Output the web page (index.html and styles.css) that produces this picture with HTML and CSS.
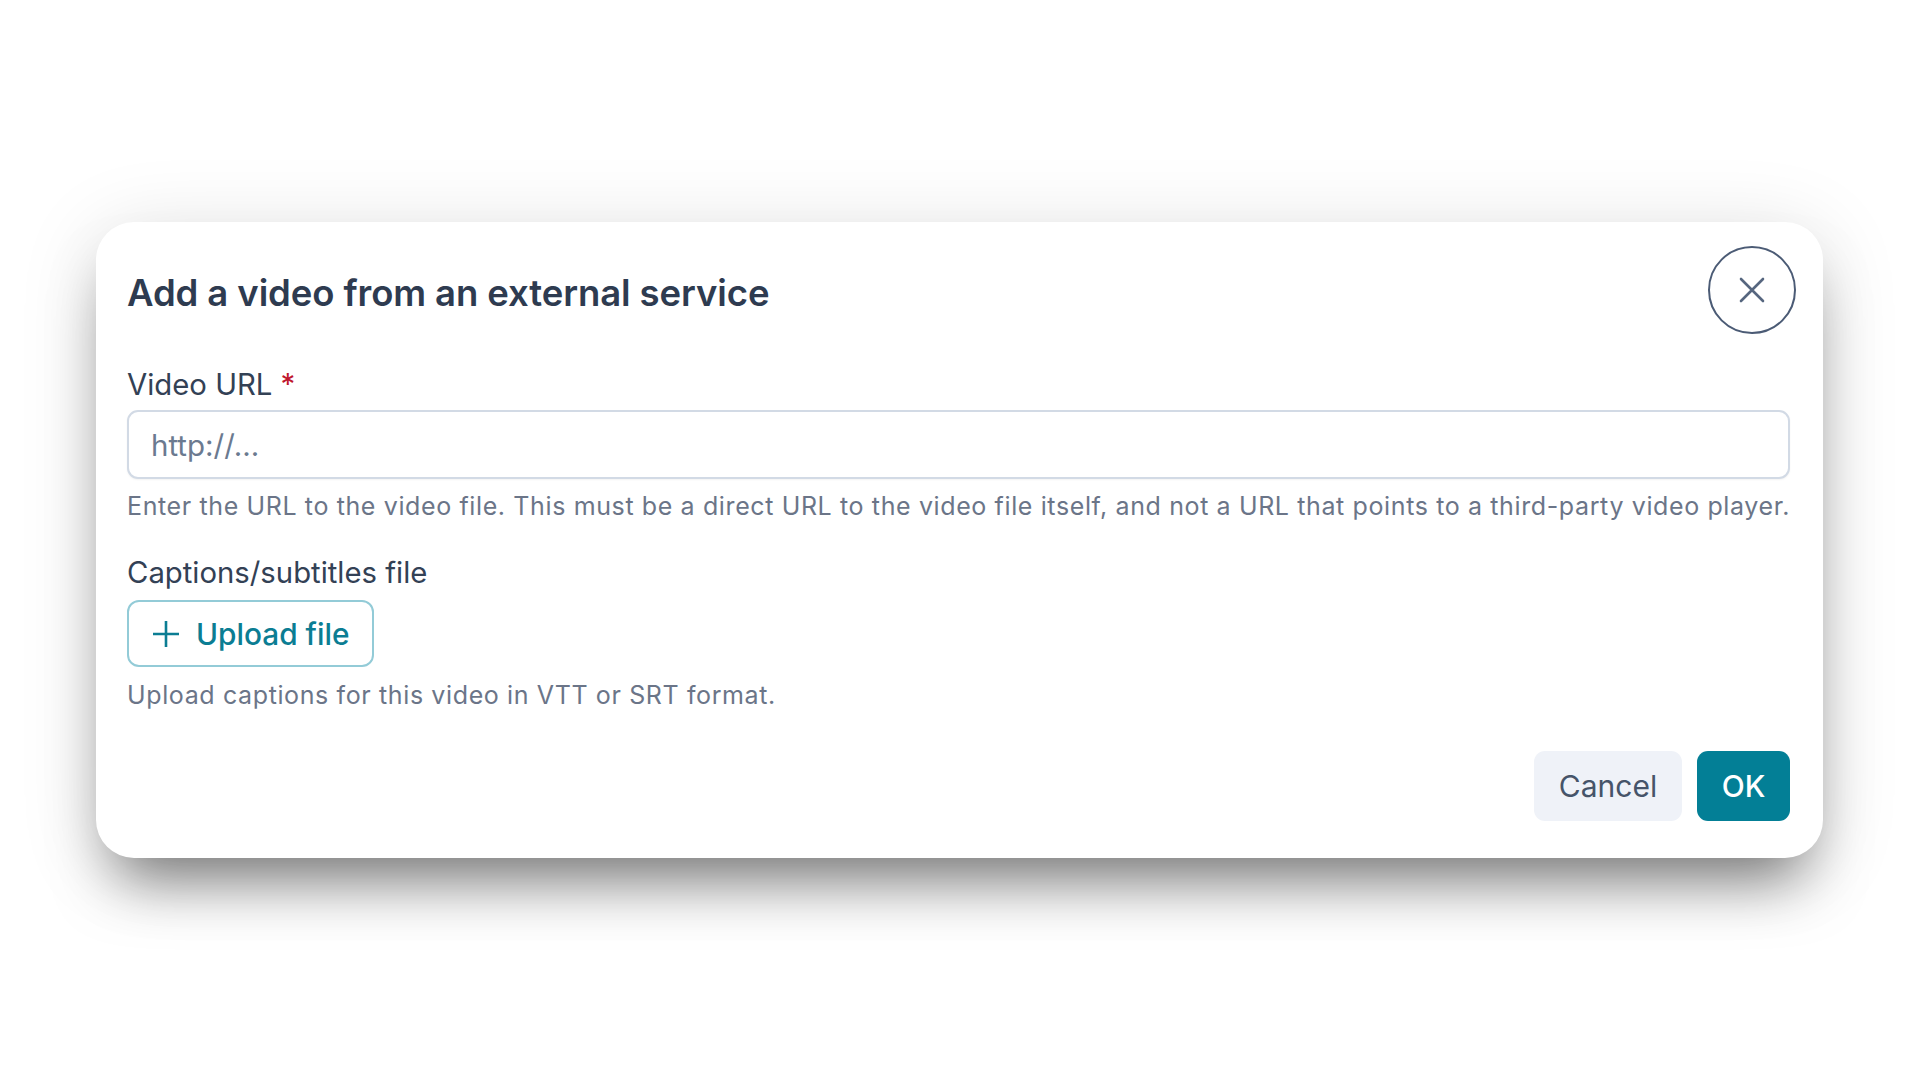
FILE: index.html
```html
<!DOCTYPE html>
<html>
<title>Add a video</title>

<head>
    <meta charset="utf-8">
    <link rel="stylesheet" href="styles.css">
</head>

<body>
    <div class="dialog">
        <div class="dialog-header">
            <h2>Add a video from an external service</h2>
            <button class="close" aria-label="Close">
                <svg width="26" height="26" viewBox="0 0 26 26">
                    <path d="M2 2 L24 24 M24 2 L2 24" stroke="#56667f" stroke-width="2.6" stroke-linecap="round" fill="none" />
                </svg>
            </button>
        </div>

        <form class="dialog-body">
            <div class="field">
                <label for="url">Video URL <span class="required">*</span></label>
                <input id="url" type="text" placeholder="http://..." />
                <p class="help">Enter the URL to the video file. This must be a direct URL to the video file itself, and not a URL that points to a third-party video player.</p>
            </div>

            <div class="field captions">
                <label>Captions/subtitles file</label>
                <div>
                    <button type="button" class="upload">
                        <svg width="30" height="30" viewBox="0 0 30 30">
                            <path d="M15 2 V28 M2 15 H28" stroke="#0b7d93" stroke-width="2.6" fill="none" />
                        </svg>
                        Upload file
                    </button>
                </div>
                <p class="help">Upload captions for this video in VTT or SRT format.</p>
            </div>

            <div class="dialog-footer">
                <button type="button" class="btn btn-cancel">Cancel</button>
                <button type="button" class="btn btn-ok">OK</button>
            </div>
        </form>
    </div>
</body>

</html>
```

FILE: styles.css
```css
body {
    font-family: Inter, "Noto Sans", sans-serif;
    background-color: #fff;
    margin: 0;
    padding: 222px 0 0 96px;
    height: 1080px;
    box-sizing: border-box;
    overflow: hidden;
}

.dialog {
    width: 1727px;
    height: 636px;
    box-sizing: border-box;
    background-color: #fff;
    border-radius: 38px;
    padding: 24px 33px 37px 31px;
    box-shadow: 0 40px 60px -20px rgba(0, 0, 0, 0.5), 0 10px 80px rgba(0, 0, 0, 0.13);
    display: flex;
    flex-direction: column;
}

.dialog-header {
    display: flex;
    align-items: center;
    justify-content: space-between;
    height: 88px;
}

.dialog-header h2 {
    margin: 0;
    font-size: 36.5px;
    font-weight: 600;
    color: #2e3b50;
    letter-spacing: -0.1px;
    padding-top: 5px;
}

.close {
    width: 88px;
    height: 88px;
    margin-right: -6px;
    border-radius: 50%;
    border: 2px solid #4b5b75;
    background: #fff;
    display: flex;
    align-items: center;
    justify-content: center;
    padding: 0;
    cursor: pointer;
}

.dialog-body {
    display: flex;
    flex-direction: column;
    flex: 1;
    margin: 0;
}

.field {
    display: flex;
    flex-direction: column;
    margin-top: 33px;
}

.field.captions {
    margin-top: 33px;
}

.field label {
    font-size: 29.3px;
    line-height: 36px;
    color: #334155;
    margin-bottom: 7px;
}

.captions label {
    margin-bottom: 9px;
}

.required {
    color: #c0172d;
}

.field input {
    height: 69px;
    box-sizing: border-box;
    border: 2px solid #d2dae5;
    border-radius: 11px;
    padding: 0 22px;
    font-family: inherit;
    font-size: 29.5px;
    color: #334155;
    box-shadow: 0 1px 2px rgba(0, 0, 0, 0.05);
}

.field input::placeholder {
    color: #6b7a90;
}

.help {
    margin: 11px 0 0;
    font-size: 25px;
    line-height: 32px;
    letter-spacing: 0.62px;
    color: #6b7588;
    white-space: nowrap;
}

.captions .help {
    margin-top: 12px;
}

.upload {
    height: 67px;
    width: 247px;
    box-sizing: border-box;
    border: 2px solid #93cbd7;
    border-radius: 12px;
    background: #fff;
    color: #0b7d93;
    font-family: inherit;
    font-size: 29.8px;
    font-weight: 500;
    display: flex;
    align-items: center;
    gap: 15px;
    padding: 0 0 0 22px;
    cursor: pointer;
}

.dialog-footer {
    margin-top: auto;
    display: flex;
    justify-content: flex-end;
    gap: 15px;
}

.btn {
    height: 70px;
    border: none;
    border-radius: 11px;
    font-family: inherit;
    font-size: 30px;
    cursor: pointer;
}

.btn-cancel {
    width: 148px;
    background-color: #eff2f8;
    color: #465469;
}

.btn-ok {
    width: 93px;
    background-color: #037f96;
    color: #fff;
    font-weight: 500;
}
```
